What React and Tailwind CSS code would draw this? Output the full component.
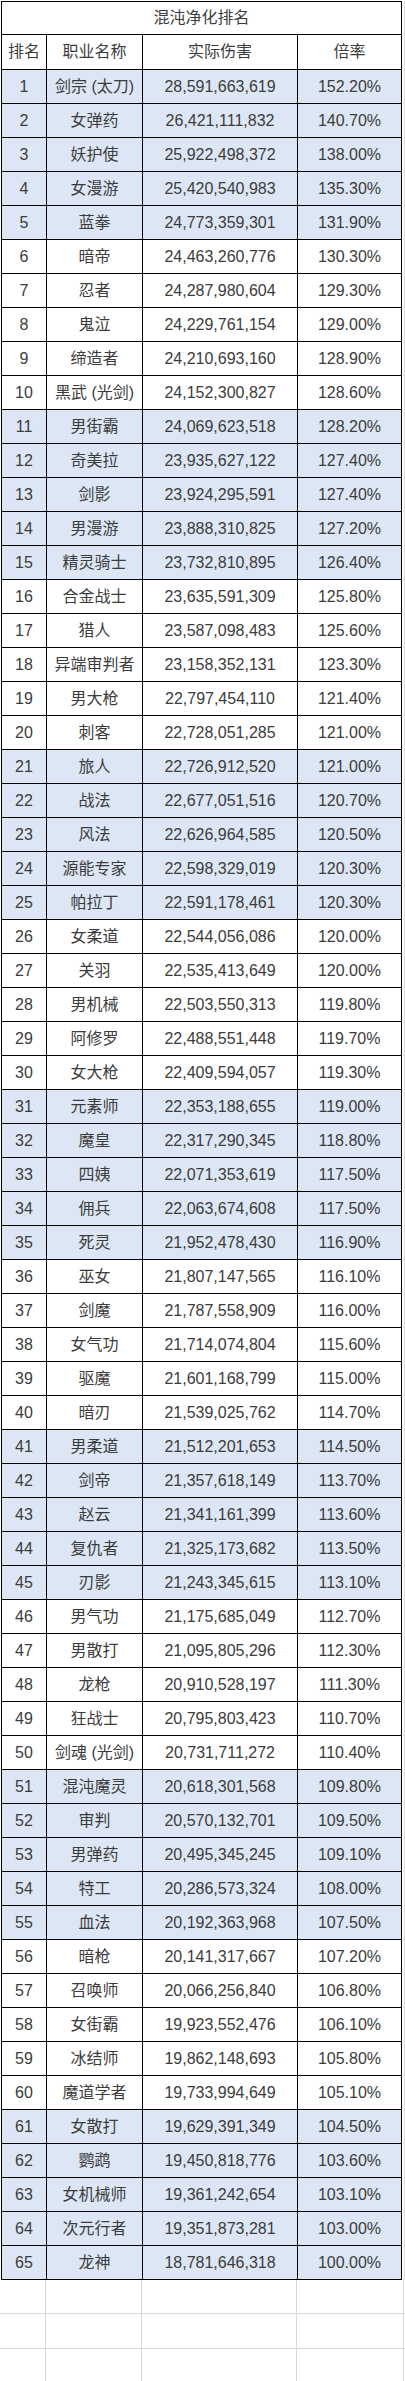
import React from "react";

const rows = [
  ["剑宗 (太刀)", "28,591,663,619", "152.20%"],
  ["女弹药", "26,421,111,832", "140.70%"],
  ["妖护使", "25,922,498,372", "138.00%"],
  ["女漫游", "25,420,540,983", "135.30%"],
  ["蓝拳", "24,773,359,301", "131.90%"],
  ["暗帝", "24,463,260,776", "130.30%"],
  ["忍者", "24,287,980,604", "129.30%"],
  ["鬼泣", "24,229,761,154", "129.00%"],
  ["缔造者", "24,210,693,160", "128.90%"],
  ["黑武 (光剑)", "24,152,300,827", "128.60%"],
  ["男街霸", "24,069,623,518", "128.20%"],
  ["奇美拉", "23,935,627,122", "127.40%"],
  ["剑影", "23,924,295,591", "127.40%"],
  ["男漫游", "23,888,310,825", "127.20%"],
  ["精灵骑士", "23,732,810,895", "126.40%"],
  ["合金战士", "23,635,591,309", "125.80%"],
  ["猎人", "23,587,098,483", "125.60%"],
  ["异端审判者", "23,158,352,131", "123.30%"],
  ["男大枪", "22,797,454,110", "121.40%"],
  ["刺客", "22,728,051,285", "121.00%"],
  ["旅人", "22,726,912,520", "121.00%"],
  ["战法", "22,677,051,516", "120.70%"],
  ["风法", "22,626,964,585", "120.50%"],
  ["源能专家", "22,598,329,019", "120.30%"],
  ["帕拉丁", "22,591,178,461", "120.30%"],
  ["女柔道", "22,544,056,086", "120.00%"],
  ["关羽", "22,535,413,649", "120.00%"],
  ["男机械", "22,503,550,313", "119.80%"],
  ["阿修罗", "22,488,551,448", "119.70%"],
  ["女大枪", "22,409,594,057", "119.30%"],
  ["元素师", "22,353,188,655", "119.00%"],
  ["魔皇", "22,317,290,345", "118.80%"],
  ["四姨", "22,071,353,619", "117.50%"],
  ["佣兵", "22,063,674,608", "117.50%"],
  ["死灵", "21,952,478,430", "116.90%"],
  ["巫女", "21,807,147,565", "116.10%"],
  ["剑魔", "21,787,558,909", "116.00%"],
  ["女气功", "21,714,074,804", "115.60%"],
  ["驱魔", "21,601,168,799", "115.00%"],
  ["暗刃", "21,539,025,762", "114.70%"],
  ["男柔道", "21,512,201,653", "114.50%"],
  ["剑帝", "21,357,618,149", "113.70%"],
  ["赵云", "21,341,161,399", "113.60%"],
  ["复仇者", "21,325,173,682", "113.50%"],
  ["刃影", "21,243,345,615", "113.10%"],
  ["男气功", "21,175,685,049", "112.70%"],
  ["男散打", "21,095,805,296", "112.30%"],
  ["龙枪", "20,910,528,197", "111.30%"],
  ["狂战士", "20,795,803,423", "110.70%"],
  ["剑魂 (光剑)", "20,731,711,272", "110.40%"],
  ["混沌魔灵", "20,618,301,568", "109.80%"],
  ["审判", "20,570,132,701", "109.50%"],
  ["男弹药", "20,495,345,245", "109.10%"],
  ["特工", "20,286,573,324", "108.00%"],
  ["血法", "20,192,363,968", "107.50%"],
  ["暗枪", "20,141,317,667", "107.20%"],
  ["召唤师", "20,066,256,840", "106.80%"],
  ["女街霸", "19,923,552,476", "106.10%"],
  ["冰结师", "19,862,148,693", "105.80%"],
  ["魔道学者", "19,733,994,649", "105.10%"],
  ["女散打", "19,629,391,349", "104.50%"],
  ["鹦鹉", "19,450,818,776", "103.60%"],
  ["女机械师", "19,361,242,654", "103.10%"],
  ["次元行者", "19,351,873,281", "103.00%"],
  ["龙神", "18,781,646,318", "100.00%"],
];

const font = {
  fontFamily: '"Liberation Sans", "Noto Sans CJK SC", sans-serif',
};

const cell = "flex items-center justify-center border-r border-b border-black";

const Row = ({ rank, name, dmg, rate }) => {
  // every five rows switch between blue and white
  const blue = Math.floor((rank - 1) / 5) % 2 === 0;
  const bg = blue ? "bg-[#dce6f4]" : "bg-white";
  return (
    <div className={`grid grid-cols-[45px_96px_155px_104px] h-[34px] ${bg}`}>
      <div className={cell}>{rank}</div>
      <div className={cell}>{name}</div>
      <div className={cell}>{dmg}</div>
      <div className={cell}>{rate}</div>
    </div>
  );
};

const EmptyRow = ({ h }) => (
  <div className={`flex ${h}`}>
    <div className="w-[46px] border-r border-b border-[#d9d9d9]" />
    <div className="w-[96px] border-r border-b border-[#d9d9d9]" />
    <div className="w-[155px] border-r border-b border-[#d9d9d9]" />
    <div className="w-[107px] border-r border-b border-[#d9d9d9]" />
    <div className="flex-1 border-b border-[#d9d9d9]" />
  </div>
);

const App = () => {
  return (
    <div
      className="w-[405px] h-[2381px] bg-white text-[16px] text-[#3c3c3c] overflow-hidden"
      style={font}
    >
      <div className="flex pt-px pl-px">
        <div className="w-[401px] border-l border-t border-black">
          <div className="h-[33px] border-r border-b border-black flex items-center justify-center">
            混沌净化排名
          </div>
          <div className="grid grid-cols-[45px_96px_155px_104px] h-[35px]">
            <div className={cell}>排名</div>
            <div className={cell}>职业名称</div>
            <div className={cell}>实际伤害</div>
            <div className={cell}>倍率</div>
          </div>
          {rows.map((r, i) => (
            <Row key={i} rank={i + 1} name={r[0]} dmg={r[1]} rate={r[2]} />
          ))}
        </div>
        <div className="w-[3px] border-r border-[#d9d9d9]" />
      </div>
      <EmptyRow h="h-[34px]" />
      <EmptyRow h="h-[35px]" />
      <EmptyRow h="h-[35px]" />
    </div>
  );
};

export default App;
